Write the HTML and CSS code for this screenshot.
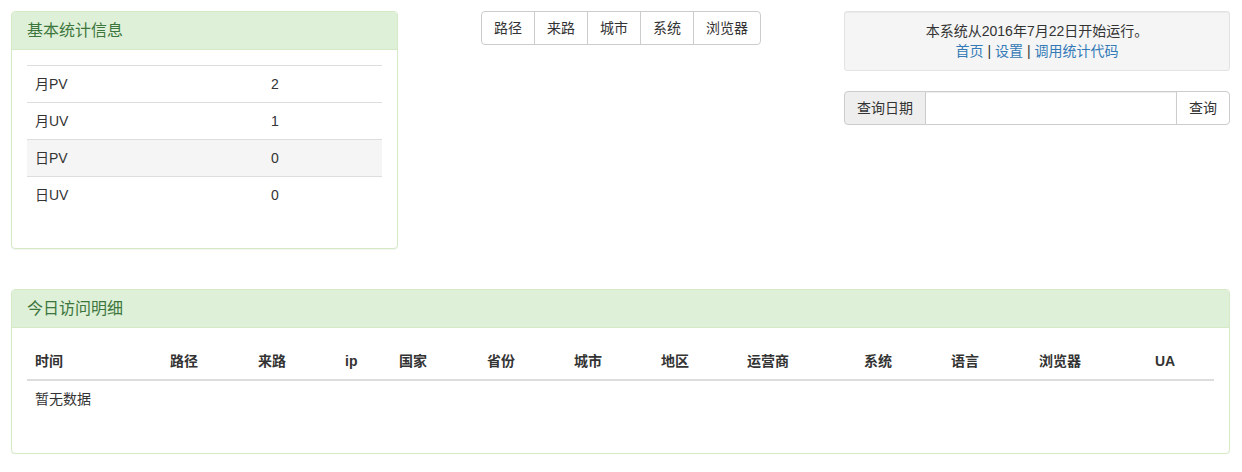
FILE: index.html
```html
<!DOCTYPE html>
<html lang="zh-CN">
<head>
    <meta charset="UTF-8">
    <title>访问统计</title>
    <link rel="stylesheet" href="styles.css">
</head>
<body>
    <div class="top-row">
        <div class="panel">
            <div class="panel-heading">基本统计信息</div>
            <div class="panel-body">
                <table class="table stat-table">
                    <tr><td class="name">月PV</td><td>2</td></tr>
                    <tr><td class="name">月UV</td><td>1</td></tr>
                    <tr class="active"><td class="name">日PV</td><td>0</td></tr>
                    <tr><td class="name">日UV</td><td>0</td></tr>
                </table>
            </div>
        </div>

        <div class="center-col">
            <div class="btn-group">
                <button class="btn">路径</button>
                <button class="btn">来路</button>
                <button class="btn">城市</button>
                <button class="btn">系统</button>
                <button class="btn">浏览器</button>
            </div>
        </div>

        <div class="right-col">
            <div class="well">
                本系统从2016年7月22日开始运行。<br>
                <a href="#">首页</a> | <a href="#">设置</a> | <a href="#">调用统计代码</a>
            </div>
            <div class="input-group">
                <span class="addon">查询日期</span>
                <input type="text" class="date-input">
                <button class="btn search-btn">查询</button>
            </div>
        </div>
    </div>

    <div class="panel detail-panel">
        <div class="panel-heading">今日访问明细</div>
        <div class="panel-body">
            <table class="table detail-table">
                <colgroup>
                    <col style="width:135px"><col style="width:88px"><col style="width:87px"><col style="width:54px">
                    <col style="width:88px"><col style="width:87px"><col style="width:87px"><col style="width:86px">
                    <col style="width:117px"><col style="width:87px"><col style="width:88px"><col style="width:116px">
                    <col>
                </colgroup>
                <thead>
                    <tr>
                        <th>时间</th><th>路径</th><th>来路</th><th>ip</th><th>国家</th><th>省份</th><th>城市</th>
                        <th>地区</th><th>运营商</th><th>系统</th><th>语言</th><th>浏览器</th><th>UA</th>
                    </tr>
                </thead>
                <tbody>
                    <tr><td colspan="13">暂无数据</td></tr>
                </tbody>
            </table>
        </div>
    </div>
</body>
</html>
```

FILE: styles.css
```css
body {
    margin: 0;
    padding: 11px 12px 0 11px;
    font-family: "Liberation Sans", Arial, "Noto Sans CJK SC", sans-serif;
    font-size: 14px;
    line-height: 20px;
    color: #333;
    background-color: #fff;
}
.top-row {
    display: grid;
    grid-template-columns: 387px 1fr 386px;
    align-items: start;
}
.panel {
    background-color: #fff;
    border: 1px solid #d6e9c6;
    border-radius: 4px;
    box-shadow: 0 1px 1px rgba(0, 0, 0, 0.05);
}
.panel-heading {
    background-color: #dff0d8;
    color: #3c763d;
    border-bottom: 1px solid #d6e9c6;
    border-radius: 3px 3px 0 0;
    padding: 10px 15px;
    font-size: 16px;
    line-height: 17px;
}
.panel-body {
    padding: 15px;
}
.table {
    width: 100%;
    border-collapse: collapse;
    margin-bottom: 20px;
}
.table td, .table th {
    padding: 8px;
    text-align: left;
    border-top: 1px solid #ddd;
}
.stat-table .name {
    width: 220px;
}
.stat-table tr.active td {
    background-color: #f5f5f5;
}
.center-col {
    display: flex;
    justify-content: center;
}
.btn-group {
    display: flex;
}
.btn {
    font-family: inherit;
    font-size: 14px;
    line-height: 20px;
    padding: 6px 12px;
    color: #333;
    background-color: #fff;
    border: 1px solid #ccc;
    margin: 0;
    cursor: pointer;
}
.btn-group .btn + .btn {
    margin-left: -1px;
}
.btn-group .btn:first-child {
    border-radius: 4px 0 0 4px;
}
.btn-group .btn:last-child {
    border-radius: 0 4px 4px 0;
}
.well {
    background-color: #f5f5f5;
    border: 1px solid #e3e3e3;
    border-radius: 3px;
    padding: 9px;
    text-align: center;
    margin-bottom: 20px;
    box-shadow: inset 0 1px 1px rgba(0, 0, 0, 0.05);
}
.well a {
    color: #337ab7;
    text-decoration: none;
}
.input-group {
    display: flex;
    height: 34px;
}
.addon {
    padding: 6px 12px;
    background-color: #eee;
    border: 1px solid #ccc;
    border-radius: 4px 0 0 4px;
    white-space: nowrap;
}
.date-input {
    flex: 1;
    min-width: 0;
    border: 1px solid #ccc;
    border-left: none;
    padding: 6px 12px;
    font-family: inherit;
    font-size: 14px;
    box-shadow: inset 0 1px 1px rgba(0, 0, 0, 0.075);
}
.search-btn {
    margin-left: -1px;
    border-radius: 0 4px 4px 0;
}
.detail-panel {
    margin-top: 40px;
}
.detail-table {
    table-layout: fixed;
}
.detail-table thead th {
    border-top: none;
    border-bottom: 2px solid #ddd;
    font-weight: bold;
}
.detail-table tbody td {
    border-top: none;
    border-bottom: 1px solid #fff;
}
```
